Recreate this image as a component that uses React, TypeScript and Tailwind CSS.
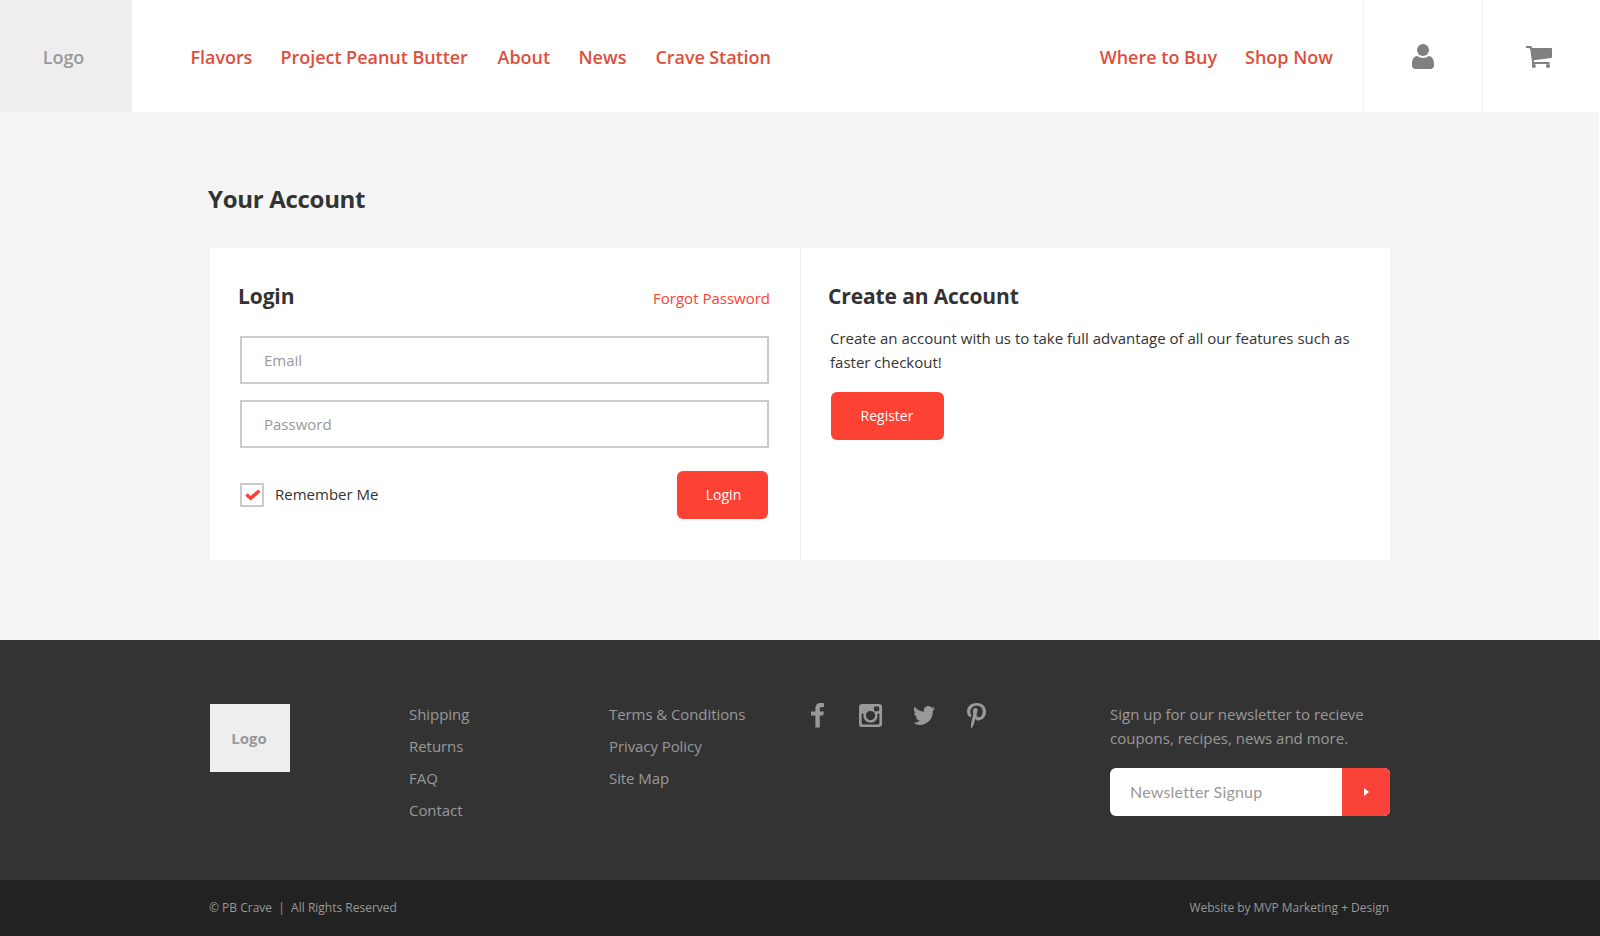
import React from "react";

const mainLinks = [
  { label: "Flavors", cls: "w-[90px] tracking-[-0.05px]" },
  { label: "Project Peanut Butter", cls: "w-[217px] tracking-[-0.04px]" },
  { label: "About", cls: "w-[81px]" },
  { label: "News", cls: "w-[77px]" },
  { label: "Crave Station", cls: "w-[130px] tracking-[-0.08px]" },
];

function UserIcon() {
  return (
    <svg width="22" height="25" viewBox="0 0 22 25" fill="#808080">
      <circle cx="11" cy="6" r="6" />
      <path d="M5.2 12.1C7 13.4 8.8 14.1 11 14.1s4-.7 5.8-2C20.200 12.300 22 15.500 22 20.300V21.500C22 23.600 20.500 25 18.400 25H3.600C1.500 25 0 23.600 0 21.500V20.300C0 15.500 1.800 12.300 5.200 12.100z" />
    </svg>
  );
}

function CartIcon() {
  return (
    <svg width="26" height="23" viewBox="0 0 26 23" fill="#808080">
      <path d="M0 0h5q1 0 1.200 2H25q1 0 1 1v8q0 .9-.9 1L8 14.200 7.800 16H23.500v2H7.600v2H6V16L4.500 4.600Q4.200 2 3 2H.8Q0 2 0 1z" />
      <circle cx="7.900" cy="20" r="2" />
      <circle cx="22" cy="20" r="2" />
    </svg>
  );
}

function Facebook() {
  return (
    <svg width="13" height="25" viewBox="0 0 13 25" fill="#999">
      <path d="M13 .2v3.900h-2.300C9.200 4.100 8.800 4.800 8.800 6v2.500h4l-.5 4.100H8.800V24.500H4.400V12.600H0V8.500h4.400V5.300C4.400 1.900 6.500 0 9.700 0 11.200 0 12.500.1 13 .2z" />
    </svg>
  );
}

function Instagram() {
  return (
    <svg width="23" height="23" viewBox="0 0 23 23">
      <path
        fill="#999"
        fillRule="evenodd"
        d="M3 0H20Q23 0 23 3V20Q23 23 20 23H3Q0 23 0 20V3Q0 0 3 0zM16 2.600Q15 2.600 15 3.600V6.200Q15 7.200 16 7.200H19Q20.200 7.200 20.200 6V3.600Q20.200 2.600 19 2.600zM2.600 9.700V19.300Q2.600 20.400 3.700 20.400H19.300Q20.400 20.400 20.400 19.300V9.700H18.300A7.100 7.100 0 1 1 4.700 9.700z"
      />
      <circle cx="11.500" cy="11.600" r="4.600" fill="#333" />
    </svg>
  );
}

function Twitter() {
  return (
    <svg width="22" height="19" viewBox="1.700 5.500 22.300 18.400" preserveAspectRatio="none" fill="#999">
      <path d="M24 7.700c-.8.400-1.700.6-2.600.7.900-.6 1.600-1.500 2-2.500-.9.500-1.800.9-2.900 1.100A4.500 4.500 0 0 0 12.700 10c0 .4 0 .7.100 1A12.900 12.900 0 0 1 3.400 6.300a4.600 4.600 0 0 0 1.400 6.100c-.7 0-1.400-.2-2-.6v.1c0 2.200 1.500 4 3.600 4.500-.7.200-1.400.2-2 .1.600 1.800 2.300 3.100 4.200 3.200a9.200 9.200 0 0 1-6.700 1.900 12.900 12.900 0 0 0 19.900-11.500c.9-.6 1.600-1.400 2.200-2.400z" />
    </svg>
  );
}

function Pinterest() {
  return (
    <svg width="19" height="25" viewBox="0 0 18.300 24" preserveAspectRatio="none" fill="#999">
      <path d="M0 8C0 3.300 4.300 0 9.400 0c4.800 0 8.900 3.300 8.900 8 0 4.600-2.700 8.700-7 8.700-1.500 0-2.900-.7-3.400-1.700-.9 3.700-1.100 5.400-2.400 7.500-.4.700-.9 1.200-1.100 1.500-.3.100-.5 0-.5-.2-.3-2.600 0-4.200.5-6.400l1.700-7.100c-.9-1.900-.4-5.600 2.100-5.600 3.500 0 1.500 3.900 1.100 6.100-.5 1.800.8 2.900 2.200 2.900 2.600 0 3.600-3.400 3.600-5.800 0-3.200-2.400-5.200-5.600-5.200-3.600 0-6.300 2.500-6.300 5.900 0 1.600 1 2.400 1 3 0 .5-.3 1.900-.9 1.900C1.800 13.500 0 11.700 0 8z" />
    </svg>
  );
}

const field =
  "block h-12 w-[529px] border-2 border-[#cbcbcb] bg-white pl-[22px] text-[15px] leading-6 outline-none placeholder:text-[#999]";

export default function App() {
  return (
    <div className="flex h-[936px] w-[1600px] flex-col overflow-hidden bg-white font-['Open_Sans',sans-serif] text-[#333]">
      <header className="flex h-28 shrink-0 bg-white text-[18px] font-semibold leading-6 text-[#dd4f40]">
        <div className="flex w-[132px] items-center justify-center bg-[#eee] pr-[5px] pt-[2px] text-[#999]">
          Logo
        </div>
        <nav className="flex flex-1 items-center pl-[58.5px] pt-[2px] whitespace-nowrap">
          {mainLinks.map((l) => (
            <a key={l.label} className={l.cls}>
              {l.label}
            </a>
          ))}
        </nav>
        <nav className="flex items-center gap-7 pr-[30px] pt-[2px] whitespace-nowrap">
          <a>Where to Buy</a>
          <a>Shop Now</a>
        </nav>
        <div className="flex w-[119px] items-center justify-center border-l border-[#eee] pt-px">
          <UserIcon />
        </div>
        <div className="flex w-[118px] items-center justify-center border-l border-[#eee] pt-[3px] pr-[6px]">
          <CartIcon />
        </div>
      </header>

      <main className="mr-px h-[528px] shrink-0 bg-[#f5f5f5] pl-[210px] pt-[71px]">
        <h1 className="-ml-[2px] h-[65px] text-[24px] font-bold leading-8 tracking-[-0.3px]">Your Account</h1>
        <section className="flex h-[312px] w-[1180px] bg-white">
          <div className="w-[590px] pl-[30px] pt-[33px]">
            <div className="flex h-[55px] w-[530px] justify-between">
              <h2 className="-ml-[2px] text-[21px] font-bold leading-[30px] tracking-[-0.12px]">Login</h2>
              <a className="pt-[5px] text-[15px] leading-6 text-[#fd4133]">Forgot Password</a>
            </div>
            <div className="flex flex-col gap-4">
              <input className={field} placeholder="Email" />
              <input className={field} placeholder="Password" />
            </div>
            <div className="mt-[23px] flex h-12 w-[528px] items-center">
              <span className="flex size-6 items-center justify-center border-2 border-[#cbcbcb] pl-px">
                <svg width="16" height="12" viewBox="0 0 16 12" fill="none" stroke="#fd4133" strokeWidth="3.400">
                  <path d="M1.400 5.500L5.700 9.300L14.300 1.700" />
                </svg>
              </span>
              <span className="ml-[11px] flex-1 pb-[2px] text-[15px] leading-6">Remember Me</span>
              <button className="h-12 w-[91px] rounded-md bg-[#fd4133] pb-[2px] pl-[2px] text-[14px] text-white">
                Login
              </button>
            </div>
          </div>
          <div className="w-[590px] border-l border-[#eee] pl-[29px] pt-[33px]">
            <h2 className="-ml-[2px] text-[21px] font-bold leading-[30px] tracking-[-0.12px]">Create an Account</h2>
            <p className="mt-[15px] w-[530px] text-[15px] leading-6">
              Create an account with us to take full advantage of all our features such as faster checkout!
            </p>
            <button className="ml-px mt-[18px] h-12 w-[113px] rounded-md bg-[#fd4133] pb-[2px] pr-px text-[14px] text-white">
              Register
            </button>
          </div>
        </section>
      </main>

      <footer className="flex h-60 shrink-0 bg-[#333] pl-[210px] pt-16 text-[15px] leading-8 text-[#999]">
        <div className="flex h-[68px] w-20 items-center justify-center bg-[#eee] pr-[2px] font-bold">Logo</div>
        <ul className="ml-[119px] -mt-[6px] w-[200px] tracking-[-0.05px]">
          <li>Shipping</li>
          <li>Returns</li>
          <li>FAQ</li>
          <li>Contact</li>
        </ul>
        <ul className="-mt-[6px] w-[202px] tracking-[-0.08px]">
          <li>Terms &amp; Conditions</li>
          <li>Privacy Policy</li>
          <li>Site Map</li>
        </ul>
        <div className="-mt-[2px] flex h-[26px] w-[299px] items-center">
          <span className="w-12"><Facebook /></span>
          <span className="w-[54px]"><Instagram /></span>
          <span className="w-[54px]"><Twitter /></span>
          <Pinterest />
        </div>
        <div className="w-[280px]">
          <p className="-mt-[2px] leading-6">
            Sign up for our newsletter to recieve
            <br />
            coupons, recipes, news and more.
          </p>
          <div className="mt-[18px] flex h-12 overflow-hidden rounded-md bg-white">
            <input
              className="w-[232px] pl-5 font-[Lato,sans-serif] text-[16px] tracking-[0.2px] outline-none placeholder:text-[#999]"
              placeholder="Newsletter Signup"
            />
            <button className="flex w-12 items-center justify-center bg-[#fb4239]">
              <svg width="5" height="8" viewBox="0 0 5 8" fill="#fff">
                <path d="M0 0L5 4L0 8z" />
              </svg>
            </button>
          </div>
        </div>
      </footer>

      <div className="flex flex-1 items-center justify-between bg-[#222] pl-[209px] pr-[211px] text-[12px] text-[#999]">
        <span className="whitespace-pre">© PB Crave  |  All Rights Reserved</span>
        <span className="tracking-[-0.03px]">Website by MVP Marketing + Design</span>
      </div>
    </div>
  );
}
